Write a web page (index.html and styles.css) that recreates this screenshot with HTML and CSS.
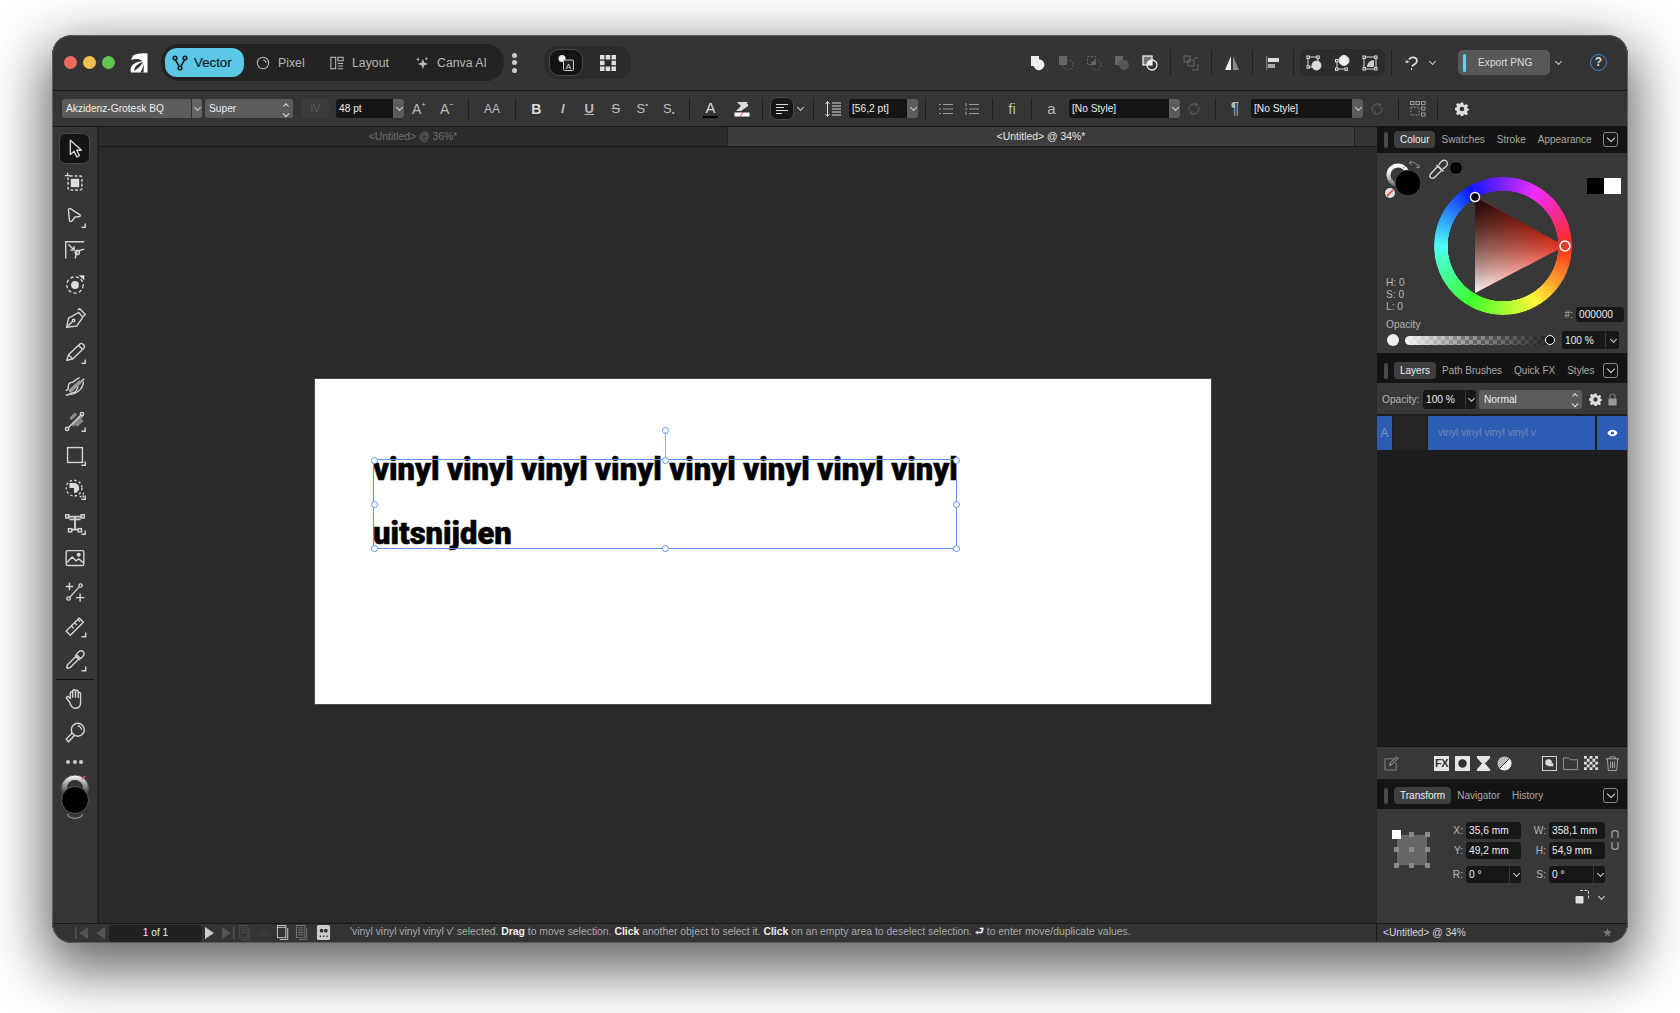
FILE: index.html
```html
<!DOCTYPE html>
<html lang="en">
<head>
    <meta charset="UTF-8">
    <title>Affinity - Untitled</title>
    <link rel="stylesheet" href="styles.css">
</head>
<body>
<div class="window">

    <!-- Title bar -->
    <div class="titlebar">
        <span class="light red"></span><span class="light yellow"></span><span class="light green"></span>
        <svg class="logo" viewBox="0 0 20 20">
            <path d="M2 7L4 2.5C8 0.5 13 0 18.5 0.5V19.5H2C0.5 15 3 10.5 9 9L13.5 8C10.5 5.5 6 5.5 2 7Z" fill="#fff"/>
            <path d="M14 9C9 10.5 5.5 13 5 18C8.5 16 12 13 14 9Z" fill="#343434"/>
            <path d="M15 10C14.5 13 13 17 11 19.5H14.5Z" fill="#343434"/>
        </svg>
        <div class="modes">
            <div class="mode mode-vector">
                <svg viewBox="0 0 16 16" fill="none" stroke="#10222a" stroke-width="1.6"><circle cx="3" cy="3" r="1.8"/><circle cx="13" cy="3" r="1.8"/><circle cx="8" cy="13" r="1.8"/><path d="M3.5 5L7 11M12.5 5L9 11"/></svg>
                <b>Vector</b>
            </div>
            <div class="mode mode-pixel">
                <svg viewBox="0 0 16 16" fill="none" stroke="#bbb" stroke-width="1.2"><circle cx="8" cy="8" r="6.5"/><path d="M8 4.5A3.5 3.5 0 0 1 11.5 8"/></svg>
                <span>Pixel</span>
            </div>
            <div class="mode mode-layout">
                <svg viewBox="0 0 16 16" fill="none" stroke="#bbb" stroke-width="1.2"><rect x="1" y="1.5" width="5.5" height="13"/><rect x="9" y="1.5" width="6" height="4"/><path d="M9 8.5H15M9 11.5H15M9 14.5H15"/></svg>
                <span>Layout</span>
            </div>
            <div class="mode mode-canva">
                <svg viewBox="0 0 16 16" fill="#bbb"><path d="M9 3L10.5 7.5L15 9L10.5 10.5L9 15L7.5 10.5L3 9L7.5 7.5Z"/><path d="M3.5 1L4.2 3L6 3.7L4.2 4.4L3.5 6.5L2.8 4.4L1 3.7L2.8 3Z"/><circle cx="13" cy="3" r="1.2"/></svg>
                <span>Canva AI</span>
            </div>
        </div>
        <div class="vdots"><i></i><i></i><i></i></div>
        <div class="studio">
            <div class="studio-btn">
                <svg viewBox="0 0 20 20" width="20" height="20" fill="none"><circle cx="6" cy="5.5" r="3.5" fill="#eee"/><rect x="7.5" y="7" width="10" height="10.5" rx="1" fill="#222" stroke="#ccc"/><text x="12.5" y="15.5" font-size="8" fill="#ddd" text-anchor="middle" font-family="Liberation Sans">A</text></svg>
            </div>
            <svg class="studio-grid" viewBox="0 0 16 16" fill="#ddd"><rect width="4.5" height="4.5"/><rect x="5.7" width="4.5" height="4.5"/><rect x="11.5" width="4.5" height="4.5"/><rect y="5.7" width="4.5" height="4.5"/><rect x="11.5" y="5.7" width="4.5" height="4.5"/><rect y="11.5" width="4.5" height="4.5"/><rect x="5.7" y="11.5" width="4.5" height="4.5"/><rect x="11.5" y="11.5" width="4.5" height="4.5"/></svg>
        </div>

        <div class="title-right">
            <div class="tic"><svg viewBox="0 0 16 16" fill="#eee"><path d="M1 1H9V4.2A5.5 5.5 0 1 1 3.6 11H1Z"/></svg></div>
            <div class="tic"><svg viewBox="0 0 16 16" fill="#666" stroke="#666"><rect x="1" y="1" width="8" height="9" stroke="none"/><circle cx="10" cy="10" r="5" fill="none" stroke-dasharray="2 1.5"/></svg></div>
            <div class="tic"><svg viewBox="0 0 16 16" fill="none" stroke="#666"><rect x="1.5" y="1.5" width="8" height="8" stroke-dasharray="2 1.5"/><circle cx="10" cy="10" r="5" stroke-dasharray="2 1.5"/><path d="M5 5.5H9.5V10H5.2A5 5 0 0 1 9.5 5.5Z" fill="#666" stroke="none"/></svg></div>
            <div class="tic"><svg viewBox="0 0 16 16" fill="#666"><path d="M1 1H9V5.2A5 5 0 0 0 5 10H1Z"/><circle cx="10" cy="10" r="5" fill="#555"/></svg></div>
            <div class="tic"><svg viewBox="0 0 16 16" fill="none" stroke="#eee" stroke-width="1.3"><rect x="1" y="1" width="9" height="9" fill="#eee" fill-opacity=".35"/><circle cx="10" cy="10" r="5"/><path d="M6 6H10V10H5.2" fill="#eee" stroke="none"/></svg></div>
            <span class="sep tall"></span>
            <div class="tic"><svg viewBox="0 0 16 16" fill="none" stroke="#666"><rect x="1" y="1" width="6" height="6"/><rect x="5" y="5" width="6" height="6"/><path d="M11 3H15M9 15H15V9"/></svg></div>
            <span class="sep tall"></span>
            <div class="tic"><svg viewBox="0 0 16 16"><path d="M7 1V15H1Z" fill="#eee"/><path d="M9 1L15 15H9Z" fill="#888"/></svg></div>
            <span class="sep tall"></span>
            <div class="tic"><svg viewBox="0 0 16 16" fill="#ddd"><rect x="1" y="1" width="1.4" height="14" fill="#777"/><rect x="3" y="3" width="11" height="4"/><rect x="3" y="9" width="7" height="4" fill="#aaa"/></svg></div>
            <span class="sep tall"></span>
            <div class="snap">
                <div class="tic"><svg viewBox="0 0 16 16" fill="none" stroke="#ddd"><circle cx="10.5" cy="10.5" r="4.5" fill="#ddd"/><rect x="2" y="2" width="10" height="10"/><rect x="1" y="1" width="2.4" height="2.4" fill="#333"/><rect x="10.8" y="1" width="2.4" height="2.4" fill="#333"/><rect x="1" y="10.8" width="2.4" height="2.4" fill="#333"/></svg></div>
                <div class="tic"><svg viewBox="0 0 16 16" fill="none" stroke="#ddd"><circle cx="10" cy="5.5" r="5" fill="#eee"/><path d="M3 6V14H11"/><rect x="1.5" y="4.5" width="2.4" height="2.4" fill="#333"/><rect x="1.5" y="13" width="2.4" height="2.4" fill="#333"/><rect x="11" y="13" width="2.4" height="2.4" fill="#333"/></svg></div>
                <div class="tic"><svg viewBox="0 0 16 16" fill="none" stroke="#ddd"><rect x="2" y="2" width="12" height="12"/><path d="M5 12C5 8 8 5 12 5V12Z" fill="#ccc" stroke="none"/><rect x="1" y="1" width="2.4" height="2.4" fill="#333"/><rect x="12.6" y="1" width="2.4" height="2.4" fill="#333"/><rect x="1" y="12.6" width="2.4" height="2.4" fill="#333"/><rect x="12.6" y="12.6" width="2.4" height="2.4" fill="#333"/></svg></div>
            </div>
            <span class="sep tall"></span>
            <div class="tic"><svg viewBox="0 0 16 16" fill="none" stroke="#ddd" stroke-width="1.8"><path d="M5 4.5C6.5 1.5 13 1.5 13 6C13 9 9.5 9 8 11.5"/><path d="M1.5 6.5L4.5 7M7 14L8 14"/></svg></div>
            <span class="chev small-chev"></span>
            <div class="export"><i></i><span>Export PNG</span></div>
            <span class="chev export-chev"></span>
            <div class="help">?</div>
        </div>
    </div>

    <!-- Context toolbar -->
    <div class="options">
        <div class="combo combo-font"><span>Akzidenz-Grotesk BQ</span><em></em></div>
        <div class="combo combo-super"><span>Super</span><u class="updown"></u></div>
        <div class="kern">iV</div>
        <div class="input input-size"><span>48 pt</span><em></em></div>
        <div class="op op-first">A<sup>+</sup></div>
        <div class="op">A<sup>−</sup></div>
        <span class="sep"></span>
        <div class="op op-aa">AA</div>
        <span class="sep"></span>
        <div class="op op-t bold">B</div>
        <div class="op op-t italic">I</div>
        <div class="op op-t under">U</div>
        <div class="op op-t strike">S</div>
        <div class="op op-t">S<sup>•</sup></div>
        <div class="op op-t">S<sub>•</sub></div>
        <span class="sep"></span>
        <div class="op op-colour">A<i></i></div>
        <div class="op op-hi">
            <svg viewBox="0 0 16 16" width="16" height="16"><path d="M2 10L9 3L14 3L14 5L7 10Z" fill="#ddd"/><path d="M3 1H14L9 7Z" fill="#ddd"/><rect x="0.5" y="11.5" width="15" height="4" fill="#fff"/><path d="M6 15.5L9 11.5" stroke="#e33"/></svg>
        </div>
        <span class="sep"></span>
        <div class="align-btn">
            <svg viewBox="0 0 14 12" width="14" height="12" stroke="#ddd"><path d="M1 1.5H13M1 4.5H9M1 7.5H13M1 10.5H7"/></svg>
        </div>
        <span class="chev align-chev"></span>
        <span class="sep"></span>
        <div class="op op-ls">
            <svg viewBox="0 0 18 18" width="18" height="18" fill="none" stroke="#ddd"><path d="M3.5 2V16M1.5 4L3.5 1.5L5.5 4M1.5 14L3.5 16.5L5.5 14"/><path d="M8 3H17M8 6H17M8 9H17M8 12H17M8 15H17"/></svg>
        </div>
        <div class="input input-ls"><span>[56,2 pt]</span><em></em></div>
        <span class="sep"></span>
        <div class="op op-list">
            <svg viewBox="0 0 14 12" width="14" height="12" stroke="#999" stroke-width="1.1"><path d="M0 1.5H2M0 6H2M0 10.5H2M4 1.5H14M4 6H14M4 10.5H14"/></svg>
        </div>
        <div class="op op-list">
            <svg viewBox="0 0 14 12" width="14" height="12" stroke="#999" stroke-width="1.1"><path d="M1 0V3.5M0 6H2.5M1 8.5V12M4 1.5H14M4 6H14M4 10.5H14"/></svg>
        </div>
        <span class="sep"></span>
        <div class="op op-fi">fi</div>
        <span class="sep"></span>
        <div class="op op-a">a</div>
        <div class="input input-style"><span>[No Style]</span><em></em></div>
        <div class="op op-loop"><svg viewBox="0 0 14 14" width="14" height="14" fill="none" stroke="#555" stroke-width="1.3"><path d="M2.5 9A5 5 0 0 1 10 3M11.5 5A5 5 0 0 1 4 11"/><path d="M8 1L10.5 3L8.5 5M6 13L3.5 11L5.5 9"/></svg></div>
        <span class="sep"></span>
        <div class="op op-pil">¶</div>
        <div class="input input-style2"><span>[No Style]</span><em></em></div>
        <div class="op op-loop"><svg viewBox="0 0 14 14" width="14" height="14" fill="none" stroke="#555" stroke-width="1.3"><path d="M2.5 9A5 5 0 0 1 10 3M11.5 5A5 5 0 0 1 4 11"/><path d="M8 1L10.5 3L8.5 5M6 13L3.5 11L5.5 9"/></svg></div>
        <span class="sep"></span>
        <div class="op op-ls"><svg viewBox="0 0 16 16" width="16" height="16" fill="none" stroke="#999"><rect x="0.5" y="0.5" width="3.5" height="3"/><rect x="6" y="0.5" width="3.5" height="3"/><rect x="11.5" y="0.5" width="3.5" height="3"/><rect x="11.5" y="6" width="3.5" height="3"/><rect x="11.5" y="12" width="3.5" height="3"/><path d="M1 6H9V14H1Z" stroke-dasharray="1.5 1.5"/></svg></div>
        <span class="sep"></span>
        <div class="op op-gear"><svg viewBox="0 0 24 24" width="14" height="14" fill="#ddd"><path d="M10 1H14L14.6 4.2L17 5.2L19.7 3.4L22.5 6.2L20.7 8.9L21.7 11.3L24 12V14L21.5 15L20.5 17.3L22.2 20L19.5 22.7L16.9 21L14.5 22L14 24H10L9.5 21.8L7 20.8L4.4 22.5L1.6 19.7L3.3 17.1L2.3 14.7L0 14V10L2.5 9.4L3.5 7L1.8 4.3L4.5 1.6L7.2 3.3L9.5 2.3ZM12 8A4 4 0 1 0 12 16A4 4 0 1 0 12 8Z" fill-rule="evenodd"/></svg></div>
    </div>

    <div class="main">

        <!-- Tools -->
        <div class="tools">
            <div class="tool active"><svg viewBox="0 0 28 28"><path d="M9 4.5V20L13 16.5L16 22.5L18.8 21L15.9 15.3H21Z" stroke-linejoin="round"/></svg></div>
            <div class="tool"><svg viewBox="0 0 28 28"><path d="M3 6H9M6 3V6"/><rect x="6.5" y="6.5" width="15" height="15" rx="2" stroke-dasharray="3 2"/><rect x="9.5" y="9.5" width="9" height="9" fill="#ddd" stroke="none"/></svg></div>
            <div class="tool"><svg viewBox="0 0 28 28"><path d="M7 6.5C7 5 8 4.5 9 5L19 11.5C20 12.2 19.8 13.5 18.5 13.6L14 14L11 18C10 19.2 8 19 8 17.5Z"/><path d="M25 21V25H21"/></svg></div>
            <div class="tool"><svg viewBox="0 0 28 28"><path d="M4 22V4H24"/><path d="M7 7L13 13M13 9V13H9"/><path d="M14 22L16.5 14M17 14L24 12"/><circle cx="16.5" cy="15.5" r="2.3"/></svg></div>
            <div class="tool"><svg viewBox="0 0 28 28"><circle cx="14" cy="14" r="8.8" stroke-dasharray="3.5 2.5"/><circle cx="14" cy="14" r="4.2" fill="#ddd" stroke="none"/><path d="M18 3.5L24 3.5V9Z" fill="#ddd" stroke="none"/></svg></div>
            <div class="tool"><svg viewBox="0 0 28 28"><path d="M5 23L7 13L18 7L22.5 12L16 21.5Z" stroke-linejoin="round"/><path d="M17 4.5L19 3L25 9L23 11.5"/><path d="M5.5 22.5L11.5 16.5"/><circle cx="12.5" cy="15.5" r="1.3"/></svg></div>
            <div class="tool"><svg viewBox="0 0 28 28"><path d="M5 22L7 16L19 4.5C20 3.5 21.5 3.5 22.5 4.5L23.5 5.5C24.5 6.5 24.5 8 23.5 9L11.5 20.5Z" stroke-linejoin="round"/><path d="M7 16L11.5 20.5M18 6L22 10"/><path d="M25 21V25H21"/></svg></div>
            <div class="tool"><svg viewBox="0 0 28 28"><path d="M4 23C9 22 9 20 12 20C15 20 17 16 17 12C17 10 20 9 24 5"/><path d="M4 18C7 17 7 14 7 12C7 8 12 10 14 7C15 6 17 5 19 4"/><path d="M9 22C14 22 23 17 23 8"/><path d="M8 19L20 8" stroke="#999" stroke-width="4"/></svg></div>
            <div class="tool"><svg viewBox="0 0 28 28"><path d="M9 12L15 6M11 19L22 8M15 19L22 13" stroke="#888" stroke-width="3.6"/><path d="M6.5 21.5L21 7"/><circle cx="5.5" cy="22.5" r="1.8"/><circle cx="21.5" cy="6.5" r="1.8"/><path d="M25 21V25H21"/></svg></div>
            <div class="tool"><svg viewBox="0 0 28 28"><rect x="6" y="6" width="16" height="16"/><path d="M25 21V25H21"/></svg></div>
            <div class="tool"><svg viewBox="0 0 28 28"><circle cx="13" cy="13" r="8.5" stroke-dasharray="2.5 2.5"/><path d="M13 7.5A5.5 5.5 0 0 1 18.5 13C18.5 16 16 18.5 13 18.5V13H8V7.5Z" fill="#ddd" stroke="none"/><path d="M19 22H23V18" stroke-dasharray="2 1"/><path d="M25 21V25H21"/></svg></div>
            <div class="tool"><svg viewBox="0 0 28 28"><path d="M6 6H22M14 6V20M10 20H18M8 9H20" stroke-width="2"/><rect x="4" y="4" width="3.5" height="3.5"/><rect x="20.5" y="4" width="3.5" height="3.5"/><rect x="7" y="19" width="3.5" height="3.5"/><rect x="17.5" y="19" width="3.5" height="3.5"/><path d="M25 21V25H21"/></svg></div>
            <div class="tool"><svg viewBox="0 0 28 28"><rect x="4.5" y="6" width="19" height="16" rx="1.5"/><path d="M5 19L11 13L15 17L18 15L23 19"/><circle cx="18" cy="10.5" r="1.5" fill="#ddd"/></svg></div>
            <div class="tool"><svg viewBox="0 0 28 28"><path d="M4 8H12M8 4V12M15 20H24M19.5 15.5V24.5"/><path d="M8.5 19.5L18.5 8.5"/><circle cx="7" cy="21" r="1.8"/><circle cx="20" cy="7" r="1.8"/></svg></div>
            <div class="tool"><svg viewBox="0 0 28 28"><path d="M4.5 19.5L18.5 5.5L23 10L9 24Z" stroke-linejoin="round"/><path d="M10 14L12.5 16.5M13.5 10.5L16 13M17 7L19.5 9.5"/><path d="M25.5 21V25.5H21"/></svg></div>
            <div class="tool"><svg viewBox="0 0 28 28"><path d="M5 22L6 19L15 10L18 13L9 22L6 23Z" stroke-linejoin="round"/><path d="M14 9L19 14M17 6C19 3.5 22 3.5 23 5C24.5 6.5 24 9 21.5 11L20 12.5L15.5 8Z"/><path d="M25.5 21V25.5H21"/></svg></div>
            <div class="tool-line"></div>
            <div class="tool"><svg viewBox="0 0 28 28"><path d="M8 17L5 13.5C4 12 6 10.5 7.5 12L9 13.5V7.5C9 5.5 11.5 5.5 11.5 7.5V12V5.5C11.5 3.5 14.5 3.5 14.5 5.5V12V6C14.5 4.2 17.5 4.2 17.5 6V12.5V8C17.5 6.5 20 6.5 20 8V18C20 22 17.5 24 14 24C11 24 9.5 22 8 17Z" stroke-linejoin="round"/></svg></div>
            <div class="tool"><svg viewBox="0 0 28 28"><circle cx="17" cy="10.5" r="7"/><path d="M17 6.5A4 4 0 0 1 21 10.5"/><path d="M11 14L4.5 20.5L7 23.5L13.5 16.5"/></svg></div>
            <div class="tool-dots"><i></i><i></i><i></i></div>
            <div class="tool-colour">
                <svg viewBox="0 0 30 46" width="30" height="46">
                    <defs><linearGradient id="strokefade" x1="0" y1="0" x2="0" y2="1"><stop offset="0" stop-color="#fff"/><stop offset=".7" stop-color="#444"/></linearGradient></defs>
                    <ellipse cx="15" cy="14" rx="13.5" ry="13" fill="url(#strokefade)" stroke="#555"/>
                    <ellipse cx="15" cy="14" rx="8" ry="8" fill="#333"/>
                    <path d="M22 5L25 2" stroke="#e66" stroke-width="1.2"/>
                    <circle cx="15" cy="26" r="13.5" fill="#000" stroke="#555"/>
                    <path d="M8 42C12 45 18 45 22 42M8 42L8 40M22 42L22 40" fill="none" stroke="#aaa"/>
                </svg>
            </div>
        </div>

        <!-- Documents -->
        <div class="work">
            <div class="tabs">
                <div class="tab">&lt;Untitled&gt; @ 36%*</div>
                <div class="tab tab-on">&lt;Untitled&gt; @ 34%*</div>
                <div class="tab-rest"></div>
            </div>
            <div class="canvas">
                <div class="doc">
                    <div class="frame-text">vinyl vinyl vinyl vinyl vinyl vinyl vinyl vinyl<br>uitsnijden</div>
                    <div class="frame">
                        <i class="grip g-rot"></i><i class="rot-line"></i>
                        <i class="grip g-tl"></i><i class="grip g-tm"></i><i class="grip g-tr"></i>
                        <i class="grip g-ml"></i><i class="grip g-mr"></i>
                        <i class="grip g-bl"></i><i class="grip g-bm"></i><i class="grip g-br"></i>
                    </div>
                </div>
            </div>
        </div>

        <!-- Studio panels -->
        <div class="panels">
            <div class="phead">
                <i class="pgrip"></i>
                <span class="ptab on">Colour</span><span class="ptab">Swatches</span><span class="ptab">Stroke</span><span class="ptab">Appearance</span>
                <span class="pmenu"></span>
            </div>
            <div class="colour">
                <svg class="colour-pick" viewBox="0 0 90 50" width="90" height="50" fill="none">
                    <defs><linearGradient id="ringfade" x1="0" y1="0" x2="0" y2="1"><stop offset=".3" stop-color="#fff"/><stop offset="1" stop-color="#777"/></linearGradient></defs>
                    <circle cx="21" cy="22" r="9.5" stroke="url(#ringfade)" stroke-width="4"/>
                    <path d="M27.5 13.5L26 15.5M13 28L15.5 26.5" stroke="#e55" stroke-width="1.2"/>
                    <circle cx="31" cy="30" r="13" fill="#000" stroke="#4a4a4a"/>
                    <circle cx="13" cy="40" r="5" fill="#ddd"/><path d="M10 43L16 37" stroke="#e33" stroke-width="1.5"/>
                    <path d="M32 10C36 8 40 10 42 15M32 10L34.5 8M32 10L35 12M42 15L42 11.5M42 15L39 14" stroke="#888"/>
                    <path d="M54 25C52.5 24 52.5 22.5 53.5 21L61 13L65 17L57.5 24.5C56.5 25.5 55 25.5 54 25Z" stroke="#ddd" stroke-width="1.3"/>
                    <path d="M59.5 12L66.5 18.5M62 12C63 9 66 6.5 68.5 7.5C71 8.5 71 11.5 69 13.5L66 16" stroke="#ddd" stroke-width="1.3"/>
                    <circle cx="79" cy="15" r="6.5" fill="#000" stroke="#4a4a4a"/>
                </svg>
                <div class="colour-top">
                    <div class="colour-left">
                        <div>H: 0</div><div>S: 0</div><div>L: 0</div>
                        <div class="opacity-label">Opacity</div>
                    </div>
                    <div class="wheel">
                        <div class="ring"></div>
                        <svg class="tri" viewBox="0 0 138 138" width="138" height="138">
                            <defs>
                                <linearGradient id="tw" gradientUnits="userSpaceOnUse" x1="41" y1="116" x2="86" y2="44"><stop offset="0" stop-color="#fff"/><stop offset="1" stop-color="#fff" stop-opacity="0"/></linearGradient>
                                <linearGradient id="tk" gradientUnits="userSpaceOnUse" x1="41" y1="20" x2="86" y2="93"><stop offset="0" stop-color="#000" stop-opacity=".9"/><stop offset="1" stop-color="#000" stop-opacity="0"/></linearGradient>
                            </defs>
                            <path d="M41 20L131 69L41 116Z" fill="#dc3421"/>
                            <path d="M41 20L131 69L41 116Z" fill="url(#tw)"/>
                            <path d="M41 20L131 69L41 116Z" fill="url(#tk)"/>
                            <circle cx="41" cy="20" r="4.5" fill="#000" stroke="#fff" stroke-width="1.5"/>
                            <circle cx="131" cy="69" r="5" fill="#d8402f" stroke="#fff" stroke-width="1.5"/>
                        </svg>
                    </div>
                    <div class="colour-right">
                        <div class="chips"><i class="chip-k"></i><i class="chip-w"></i></div>
                        <div class="hex"><label>#:</label><span>000000</span></div>
                    </div>
                </div>
                <div class="opacity-row">
                    <i class="op-dot"></i>
                    <div class="slider"><i></i></div>
                    <div class="value"><span>100 %</span><em></em></div>
                </div>
            </div>

            <div class="phead phead-tall">
                <i class="pgrip"></i>
                <span class="ptab on">Layers</span><span class="ptab">Path Brushes</span><span class="ptab">Quick FX</span><span class="ptab">Styles</span>
                <span class="pmenu"></span>
            </div>
            <div class="layer-opts">
                <label>Opacity:</label>
                <div class="value value-layer"><span>100 %</span><em></em></div>
                <div class="combo combo-blend"><span>Normal</span><u class="updown"></u></div>
                <svg class="layer-gear" viewBox="0 0 24 24" width="13" height="13" fill="#ddd"><path d="M10 1H14L14.6 4.2L17 5.2L19.7 3.4L22.5 6.2L20.7 8.9L21.7 11.3L24 12V14L21.5 15L20.5 17.3L22.2 20L19.5 22.7L16.9 21L14.5 22L14 24H10L9.5 21.8L7 20.8L4.4 22.5L1.6 19.7L3.3 17.1L2.3 14.7L0 14V10L2.5 9.4L3.5 7L1.8 4.3L4.5 1.6L7.2 3.3L9.5 2.3ZM12 8A4 4 0 1 0 12 16A4 4 0 1 0 12 8Z" fill-rule="evenodd"/></svg>
                <svg class="layer-lock" viewBox="0 0 12 14" width="11" height="13"><path d="M3 6V4A3 3 0 0 1 9 4V6" fill="none" stroke="#777" stroke-width="1.3"/><rect x="1.5" y="6" width="9" height="7.5" rx="1" fill="#999"/></svg>
            </div>
            <div class="layers">
                <div class="layer">
                    <div class="layer-a">A</div>
                    <div class="layer-thumb"></div>
                    <div class="layer-name">vinyl vinyl vinyl vinyl v</div>
                    <div class="layer-eye"><svg viewBox="0 0 14 10" width="11" height="8"><path d="M0.5 5C3.5 -0.5 10.5 -0.5 13.5 5C10.5 10.5 3.5 10.5 0.5 5Z" fill="#fff"/><circle cx="7" cy="5" r="2" fill="#2d5cb3"/></svg></div>
                </div>
            </div>
            <div class="layer-foot">
                <svg viewBox="0 0 16 16" class="lf lf-edit" fill="none" stroke="#888"><path d="M1 3H10M1 3V15H13V7"/><path d="M6 10L7 7L13.5 1L15 2.5L8.5 9Z" stroke="#aaa"/></svg>
                <div class="lf lf-fx">FX</div>
                <svg viewBox="0 0 16 16" class="lf"><rect width="16" height="16" fill="#e6e6e6"/><circle cx="8" cy="8" r="4.5" fill="#333"/></svg>
                <svg viewBox="0 0 16 16" class="lf"><path d="M1 0H15L15 2L9.5 8L15 14V16H1V14L6.5 8L1 2Z" fill="#e6e6e6"/></svg>
                <svg viewBox="0 0 16 16" class="lf"><circle cx="8" cy="8" r="7.5" fill="#bbb"/><path d="M13.3 2.7A7.5 7.5 0 0 1 2.7 13.3Z" fill="#eee"/><path d="M13.3 2.7L2.7 13.3" stroke="#333"/></svg>
                <svg viewBox="0 0 16 16" class="lf lf-gap" fill="none" stroke="#ddd"><rect x=".5" y=".5" width="15" height="15"/><circle cx="7" cy="7" r="3.5" fill="#ddd" stroke="none"/><path d="M6 11H12V7" fill="#ddd" stroke="none"/></svg>
                <svg viewBox="0 0 16 16" class="lf" fill="none" stroke="#999"><path d="M.5 14.5V2H6L7.5 4H15.5V14.5Z"/></svg>
                <svg viewBox="0 0 16 16" class="lf lf-check"><path d="M0 0h3v3H0zM6 0h3v3H6zM12 0h3v3h-3zM3 3h3v3H3zM9 3h3v3H9zM0 6h3v3H0zM6 6h3v3H6zM12 6h3v3h-3zM3 9h3v3H3zM9 9h3v3H9zM0 12h3v3H0zM6 12h3v3H6zM12 12h3v3h-3z" fill="#ddd"/></svg>
                <svg viewBox="0 0 16 16" class="lf" fill="none" stroke="#aaa"><path d="M1 3H15M5 3V1H11V3M2.5 3L3.5 15.5H12.5L13.5 3M6 6V13M8 6V13M10 6V13"/></svg>
            </div>

            <div class="phead phead-tr">
                <i class="pgrip"></i>
                <span class="ptab on">Transform</span><span class="ptab">Navigator</span><span class="ptab">History</span>
                <span class="pmenu"></span>
            </div>
            <div class="transform">
                <svg class="anchor" viewBox="0 0 36 36" width="36" height="36">
                    <rect x="3" y="3" width="30" height="30" fill="#666"/>
                    <g fill="#8a8a8a">
                        <rect x="15" y="0" width="5" height="5"/><rect x="31" y="0" width="5" height="5"/>
                        <rect x="0" y="15" width="5" height="5"/><rect x="15" y="15" width="5" height="5"/><rect x="31" y="15" width="5" height="5"/>
                        <rect x="0" y="31" width="5" height="5"/><rect x="15" y="31" width="5" height="5"/><rect x="31" y="31" width="5" height="5"/>
                    </g>
                    <rect x="-2" y="-2" width="9" height="9" fill="#fff"/>
                </svg>
                <div class="fields">
                    <label>X:</label><div class="field">35,6 mm</div>
                    <label>W:</label><div class="field">358,1 mm</div>
                    <svg class="chain" viewBox="0 0 8 20" width="8" height="20" fill="none" stroke="#aaa" stroke-width="1.2"><path d="M1 8V2.5C1 1 2 .7 4 .7C6 .7 7 1 7 2.5V8M1 12V17.5C1 19 2 19.3 4 19.3C6 19.3 7 19 7 17.5V12"/></svg>
                    <label>Y:</label><div class="field">49,2 mm</div>
                    <label>H:</label><div class="field">54,9 mm</div>
                    <label class="row3">R:</label><div class="field field-drop row3"><span>0 °</span><em></em></div>
                    <label class="row3">S:</label><div class="field field-drop row3"><span>0 °</span><em></em></div>
                </div>
                <div class="transform-more">
                    <svg viewBox="0 0 14 14" width="14" height="14" fill="none" stroke="#ccc"><path d="M5 .5H13.5V9" stroke-dasharray="3 1.5"/><rect x="0.5" y="6" width="8" height="7.5" rx="1" fill="#ddd" stroke="none"/></svg>
                    <span class="chev"></span>
                </div>
            </div>
        </div>
    </div>

    <!-- Status -->
    <div class="status">
        <div class="status-left">
            <svg class="st st-first" viewBox="0 0 14 12" fill="#555"><rect x="0" y="0" width="1.5" height="12"/><path d="M13 0V12L4 6Z"/></svg>
            <svg class="st st-prev" viewBox="0 0 14 12" fill="#555"><path d="M12 0V12L3 6Z"/></svg>
            <div class="page">1 of 1</div>
            <svg class="st st-next" viewBox="0 0 14 12" fill="#ccc"><path d="M2 0V12L11 6Z"/></svg>
            <svg class="st st-last" viewBox="0 0 14 12" fill="#555"><path d="M1 0V12L10 6Z"/><rect x="12" y="0" width="1.5" height="12"/></svg>
            <svg class="st2" viewBox="0 0 14 16" fill="none" stroke="#4d4d4d"><rect x=".5" y=".5" width="9" height="13"/><path d="M2 3H8M2 5.5H8M2 8H8"/><path d="M11 3V15.5H3"/></svg>
            <svg class="st2" viewBox="0 0 14 16" fill="none" stroke="#444"><path d="M1 10C4 6 10 6 13 10M3 12C5 10 9 10 11 12"/></svg>
            <svg class="st2" viewBox="0 0 14 16" fill="none" stroke="#ccc"><rect x=".5" y=".5" width="9" height="13"/><path d="M.5 2.5H9.5"/><path d="M11.5 3V15.5H3"/></svg>
            <svg class="st2" viewBox="0 0 14 16" fill="none" stroke="#777"><rect x=".5" y=".5" width="9" height="13"/><path d="M2 3H8M2 5.5H8M2 8H8M2 10.5H8"/><path d="M11.5 3V15.5H3"/></svg>
            <svg class="st2 st-on" viewBox="0 0 14 16"><rect width="14" height="16" rx="2" fill="#ccc"/><circle cx="5" cy="6" r="2" fill="#333"/><circle cx="9.5" cy="6" r="2" fill="#333"/><path d="M3 12H4.5M6.5 12H8M10 12H11.5" stroke="#333" stroke-width="1.5"/></svg>
            <div class="hint">'vinyl vinyl vinyl vinyl v' selected. <b>Drag</b> to move selection. <b>Click</b> another object to select it. <b>Click</b> on an empty area to deselect selection. <b>⮐</b> to enter move/duplicate values.</div>
        </div>
        <div class="status-right">
            <span>&lt;Untitled&gt; @ 34%</span>
            <svg viewBox="0 0 10 10" width="9" height="9" fill="#777"><path d="M5 0L6.2 3.4L10 3.8L7 6L8.1 9.7L5 7.6L1.9 9.7L3 6L0 3.8L3.8 3.4Z"/></svg>
        </div>
    </div>
</div>
</body>
</html>
```
FILE: styles.css
```css
* {
    margin: 0;
    padding: 0;
    box-sizing: border-box;
}

body {
    background: #fff;
    height: 1013px;
    padding: 35px 52px 0;
    overflow: hidden;
    font-family: "Liberation Sans", Arial, sans-serif;
    font-size: 10.2px;
    color: #ccc;
}

svg {
    display: block;
    flex: none;
}

.window {
    width: 1576px;
    height: 908px;
    position: relative;
    border-radius: 20px;
    overflow: hidden;
    display: flex;
    flex-direction: column;
    background: #333;
}

/* the shadow sits on the body side so the rim can stay inside the window */
.window::after {
    content: '';
    position: absolute;
    inset: 0;
    border: 1px solid #5e5e5e;
    border-radius: 20px;
    pointer-events: none;
}

body::before {
    content: '';
    position: absolute;
    left: 52px;
    top: 35px;
    width: 1576px;
    height: 908px;
    border-radius: 20px;
    box-shadow: 0 20px 55px 8px rgba(0, 0, 0, 0.6);
}

/* Title bar */
.titlebar {
    height: 56px;
    flex: none;
    display: flex;
    align-items: center;
    padding: 0 21px 0 12px;
    background: #343434;
    border-bottom: 1px solid #191919;
}

.light {
    width: 13px;
    height: 13px;
    border-radius: 50%;
    margin-right: 6px;
}

.red { background: #ec6a5e; }
.yellow { background: #f4bf4f; }
.green { background: #61c554; }

.logo {
    width: 20px;
    height: 20px;
    margin: 0 12px 0 8px;
}

.modes {
    width: 343px;
    height: 37px;
    padding: 4px;
    display: flex;
    align-items: center;
    border-radius: 18px;
    background: #232323;
}

.mode {
    height: 29px;
    display: flex;
    align-items: center;
    gap: 8px;
    font-size: 12.3px;
    color: #b5b5b5;
    flex: none;
}

.mode svg {
    width: 14px;
    height: 14px;
}

.mode-vector {
    width: 79px;
    padding-left: 7px;
    gap: 6px;
    font-size: 13.3px;
    border-radius: 12px;
    background: #5bc9e6;
    color: #10222a;
}

.mode-vector svg {
    width: 16px;
    height: 16px;
}

.mode-vector b {
    font-weight: normal;
    -webkit-text-stroke: 0.2px #10222a;
}

.mode-pixel { width: 76px; padding-left: 12px; }
.mode-layout { width: 86px; padding-left: 10px; }
.mode-canva { width: 94px; padding-left: 9px; }

.vdots {
    margin-left: 8px;
    width: 6px;
    display: flex;
    flex-direction: column;
    gap: 2.5px;
}

.vdots i {
    width: 5px;
    height: 5px;
    border-radius: 50%;
    background: #ccc;
}

.studio {
    margin-left: 26px;
    width: 87px;
    height: 33px;
    padding: 3px 5px;
    display: flex;
    align-items: center;
    border-radius: 14px;
    background: #2b2b2b;
}

.studio-btn {
    width: 34px;
    height: 27px;
    display: flex;
    align-items: center;
    justify-content: center;
    border: 1px solid #4a4a4a;
    border-radius: 10px;
    background: #141414;
}

.studio-grid {
    width: 16px;
    height: 16px;
    margin-left: 17px;
}

.title-right {
    margin-left: auto;
    display: flex;
    align-items: center;
}

.tic {
    width: 28px;
    display: flex;
    justify-content: center;
}

.tic svg {
    width: 16px;
    height: 16px;
}

.sep {
    width: 1px;
    height: 22px;
    margin: 0 7px;
    background: #202020;
    flex: none;
}

.sep.tall {
    height: 26px;
    margin: 0 6px;
}

.snap {
    width: 85px;
    height: 27px;
    display: flex;
    align-items: center;
    border-radius: 7px;
    background: #2c2c2c;
}

.chev {
    width: 12px;
    height: 12px;
    flex: none;
    display: block;
    position: relative;
}

.chev::after,
.combo em::after,
.input em::after,
.value em::after,
.field-drop em::after {
    content: '';
    position: absolute;
    left: 50%;
    top: 50%;
    width: 4px;
    height: 4px;
    margin: -3.5px 0 0 -2px;
    border-right: 1.2px solid #ccc;
    border-bottom: 1.2px solid #ccc;
    transform: rotate(45deg);
}

.export {
    width: 92px;
    height: 25px;
    margin-left: 20px;
    padding-left: 5px;
    display: flex;
    align-items: center;
    font-size: 10.2px;
    color: #ddd;
    border-radius: 5px;
    background: #585858;
}

.export i {
    width: 3px;
    height: 18px;
    border-radius: 2px;
    background: #55d8ee;
    margin-right: 12px;
}

.export-chev {
    width: 16px;
}

.help {
    width: 17px;
    height: 17px;
    margin-left: 24px;
    border: 1.3px solid #3d84e6;
    border-radius: 50%;
    font-size: 12px;
    font-weight: bold;
    line-height: 14.5px;
    text-align: center;
    color: #ddd;
}

/* Context toolbar */
.options {
    height: 36px;
    flex: none;
    display: flex;
    align-items: center;
    padding-left: 10px;
    background: #353535;
    border-bottom: 1px solid #191919;
}

.combo {
    height: 19px;
    padding-left: 4px;
    display: flex;
    align-items: center;
    position: relative;
    border-radius: 3px;
    background: #5c5c5c;
    color: #eee;
    flex: none;
}

.combo em,
.input em,
.value em,
.field-drop em {
    position: absolute;
    right: 0;
    top: 0;
    bottom: 0;
    width: 11px;
}

.combo-font { width: 140px; }
.combo-font em { background: #646464; border-left: 1px solid #333; border-radius: 0 3px 3px 0; }
.combo-super { width: 88px; margin-left: 3px; }

.updown {
    position: absolute;
    right: 5px;
    top: 50%;
    width: 4px;
    height: 4px;
    margin-top: -5px;
    border-left: 1px solid #ddd;
    border-top: 1px solid #ddd;
    transform: rotate(45deg);
}

.updown::after {
    content: '';
    position: absolute;
    left: 4px;
    top: 4px;
    width: 4px;
    height: 4px;
    border-right: 1px solid #ddd;
    border-bottom: 1px solid #ddd;
}

.kern {
    width: 27px;
    height: 19px;
    margin-left: 9px;
    border-radius: 3px;
    background: #3c3c3c;
    color: #5e5e5e;
    font-size: 11px;
    line-height: 19px;
    text-align: center;
    flex: none;
}

.input {
    height: 19px;
    padding-left: 3px;
    display: flex;
    align-items: center;
    position: relative;
    border-radius: 3px;
    background: #151515;
    color: #eee;
    flex: none;
}

.input em {
    background: #5c5c5c;
    border-radius: 0 3px 3px 0;
}

.input-size { width: 68px; margin-left: 7px; }
.input-ls { width: 69px; margin-left: 4px; }
.input-style { width: 111px; margin-left: 5px; }
.input-style2 { width: 112px; margin-left: 4px; }

.op {
    width: 24px;
    flex: none;
    display: flex;
    justify-content: center;
    align-items: center;
    font-size: 14px;
    color: #bbb;
    line-height: 16px;
    position: relative;
}

.op sup, .op sub {
    font-size: 8px;
    line-height: 8px;
    vertical-align: baseline;
}

.op sup { align-self: flex-start; }
.op sub { align-self: flex-end; }

.op-first { width: 28px; margin-left: 1px; }
.op-first + .op { width: 28px; }
.op-aa { width: 32px; font-size: 12px; }
.op-t { width: 26.5px; font-size: 13px; }
.bold { font-weight: bold; font-size: 14px; color: #ddd; }
.italic { font-style: italic; font-weight: bold; }
.under { text-decoration: underline; font-weight: bold; }
.strike { text-decoration: line-through; }

.op-colour {
    width: 27px;
    height: 18px;
    font-size: 15px;
    color: #ddd;
    align-items: flex-start;
}

.op-colour i {
    position: absolute;
    left: 6px;
    right: 6px;
    bottom: 0;
    height: 2px;
    background: #000;
}

.op-hi { width: 27px; margin-left: 4px; }
.op-list { width: 26px; }
.op-fi { font-size: 15px; color: #bbb; }
.op-a { width: 25px; font-size: 15px; }
.op-loop { width: 28px; }
.op-pil { font-size: 16px; }
.op-gear { width: 34px; }

.align-btn {
    width: 24px;
    height: 23px;
    flex: none;
    display: flex;
    align-items: center;
    justify-content: center;
    border: 1px solid #4a4a4a;
    border-radius: 7px;
    background: #161616;
}

.align-chev { width: 12px; }

/* Main area */
.main {
    flex: 1;
    display: flex;
    min-height: 0;
}

.tools {
    width: 47px;
    flex: none;
    padding-top: 6px;
    display: flex;
    flex-direction: column;
    align-items: center;
    background: #363636;
    border-right: 2px solid #222;
}

.tool {
    width: 31px;
    height: 31px;
    margin-bottom: 3.1px;
    flex: none;
    display: flex;
    align-items: center;
    justify-content: center;
}

.tool svg {
    width: 26px;
    height: 26px;
    fill: none;
    stroke: #d4d4d4;
    stroke-width: 1.5;
}

.tool.active {
    border: 1px solid #4a4a4a;
    border-radius: 7px;
    background: #141414;
}

.tool-line {
    width: 38px;
    height: 1px;
    margin: 0 0 4px;
    background: #141414;
    flex: none;
}

.tool-dots {
    display: flex;
    gap: 2.5px;
    height: 18px;
    align-items: center;
    margin-top: 1px;
}

.tool-dots i {
    width: 4px;
    height: 4px;
    border-radius: 50%;
    background: #ccc;
}

.tool-colour {
    margin-top: 3px;
}

.work {
    flex: 1;
    display: flex;
    flex-direction: column;
    min-width: 0;
}

.tabs {
    height: 20px;
    flex: none;
    display: flex;
    background: #2c2c2c;
    border-bottom: 1px solid #1a1a1a;
}

.tab {
    width: 628px;
    text-align: center;
    line-height: 19px;
    font-size: 10.4px;
    color: #6f6f6f;
}

.tab-on {
    color: #e6e6e6;
    background: #3c3c3c;
    border-left: 1px solid #222;
    border-right: 1px solid #222;
}

.tab-rest {
    flex: 1;
    background: #333;
}

.canvas {
    flex: 1;
    padding: 232px 0 0 216px;
    background: #2a2a2a;
}

.doc {
    width: 896px;
    height: 325px;
    position: relative;
    background: #fff;
    box-shadow: 0 0 0 1px #4a4a4a;
}

.frame-text {
    position: absolute;
    left: 58px;
    top: 59px;
    white-space: nowrap;
    font-family: Roboto, "Liberation Sans", sans-serif;
    font-weight: 900;
    font-size: 31px;
    line-height: 64px;
    color: #000;
    word-spacing: -0.3px;
    -webkit-text-stroke: 0.5px #000;
}

.frame {
    position: absolute;
    left: 58px;
    top: 80px;
    width: 584px;
    height: 90px;
    border: 1px solid #5d94ec;
}

.grip {
    position: absolute;
    width: 7px;
    height: 7px;
    margin: -3.5px 0 0 -3.5px;
    border: 1px solid #5d94ec;
    border-radius: 50%;
    background: #fff;
}

.g-tl { left: 0; top: 0; }
.g-tm { left: 50%; top: 0; }
.g-tr { left: 100%; top: 0; }
.g-ml { left: 0; top: 50%; }
.g-mr { left: 100%; top: 50%; }
.g-bl { left: 0; top: 100%; }
.g-bm { left: 50%; top: 100%; }
.g-br { left: 100%; top: 100%; }
.g-rot { left: 50%; top: -30px; }

.rot-line {
    position: absolute;
    left: 50%;
    top: -28px;
    width: 1px;
    height: 28px;
    background: #8db3f0;
}

/* Studio panels */
.panels {
    width: 251px;
    flex: none;
    display: flex;
    flex-direction: column;
    background: #141414;
}

.phead {
    height: 26px;
    flex: none;
    padding: 0 10px 5px 7px;
    display: flex;
    align-items: flex-end;
    font-size: 10px;
    background: #141414;
}

.phead-tall { height: 30px; padding-bottom: 4px; }
.phead-tr { height: 30px; padding-bottom: 5px; }

.pgrip {
    width: 4px;
    height: 16px;
    margin-right: 6px;
    border-radius: 2px;
    background: #4a4a4a;
}

.ptab {
    height: 17px;
    line-height: 17px;
    padding: 0 6px;
    color: #a8a8a8;
    border-radius: 4px;
}

.ptab.on {
    background: #3f3f3f;
    color: #eee;
}

.pmenu {
    width: 15px;
    height: 15px;
    margin-left: auto;
    margin-bottom: 1px;
    position: relative;
    border: 1px solid #8a8a8a;
    border-radius: 3px;
}

.pmenu::after {
    content: '';
    position: absolute;
    left: 3.5px;
    top: 1.5px;
    width: 5px;
    height: 5px;
    border-right: 1.3px solid #ddd;
    border-bottom: 1.3px solid #ddd;
    transform: rotate(45deg);
}

.colour {
    height: 200px;
    flex: none;
    position: relative;
    background: #383838;
}

.colour-pick {
    position: absolute;
    left: 0;
    top: 0;
    z-index: 2;
}

.colour-top {
    height: 178px;
    display: flex;
}

.colour-left {
    width: 57px;
    padding-left: 9px;
    display: flex;
    flex-direction: column;
    justify-content: flex-end;
    line-height: 12.3px;
    color: #b5b5b5;
}

.opacity-label {
    margin-top: 5px;
}

.wheel {
    width: 138px;
    height: 138px;
    margin-top: 24px;
    position: relative;
    flex: none;
}

.ring {
    position: absolute;
    inset: 0;
    border-radius: 50%;
    background: conic-gradient(from 90deg, #ff2a1a, #fff93a, #3dff2a, #4dfff5, #0a16ff, #ee2dff, #ff2a1a);
    -webkit-mask: radial-gradient(circle, transparent 55px, #000 55.5px);
    mask: radial-gradient(circle, transparent 55px, #000 55.5px);
}

.tri {
    position: absolute;
    left: 0;
    top: 0;
}

.colour-right {
    flex: 1;
    display: flex;
    flex-direction: column;
    justify-content: space-between;
    align-items: flex-end;
    padding: 25px 4px 9px 0;
}

.chips {
    display: flex;
    margin-right: 3px;
}

.chips i {
    width: 17px;
    height: 16px;
}

.chip-k { background: #000; }
.chip-w { background: #fff; }

.hex {
    display: flex;
    align-items: center;
    gap: 3px;
    margin-left: -12px;
    color: #b5b5b5;
    white-space: nowrap;
}

.hex span {
    width: 48px;
    height: 15px;
    padding-left: 3px;
    line-height: 15px;
    color: #eee;
    border-radius: 3px;
    background: #171717;
}

.opacity-row {
    height: 18px;
    padding-left: 10px;
    display: flex;
    align-items: center;
}

.op-dot {
    width: 12px;
    height: 12px;
    border-radius: 50%;
    background: #eee;
}

.slider {
    width: 150px;
    height: 9px;
    margin-left: 6px;
    position: relative;
    border-radius: 5px;
    background:
        linear-gradient(90deg, rgba(255, 255, 255, 0.95), rgba(255, 255, 255, 0.3) 45%, rgba(30, 30, 30, 0.9)),
        repeating-conic-gradient(#666 0 25%, #222 0 50%) 0 0 / 8px 8px;
}

.slider i {
    position: absolute;
    right: 0;
    top: -0.5px;
    width: 10px;
    height: 10px;
    border: 1.3px solid #fff;
    border-radius: 50%;
    background: #111;
}

.value {
    height: 18px;
    width: 57px;
    margin-left: 7px;
    padding-left: 3px;
    position: relative;
    display: flex;
    align-items: center;
    color: #eee;
    border-radius: 3px;
    background: #171717;
}

.value em {
    width: 14px;
    border-left: 1px solid #383838;
}

.layer-opts {
    height: 31px;
    flex: none;
    padding: 1px 0 0 5px;
    display: flex;
    align-items: center;
    background: #383838;
    color: #b5b5b5;
}

.layer-opts label {
    width: 41px;
}

.value-layer {
    width: 53px;
    height: 19px;
    margin-left: 0;
}

.value-layer em {
    width: 11px;
}

.combo-blend {
    width: 103px;
    margin-left: 3px;
    padding-left: 5px;
}

.layer-gear {
    margin-left: 7px;
}

.layer-lock {
    margin-left: 5px;
}

.layers {
    height: 332px;
    flex: none;
    padding-top: 2px;
    background: #1d1d1d;
}

.layer {
    height: 34px;
    margin-right: 1px;
    display: flex;
    gap: 1px;
}

.layer-a {
    width: 15px;
    background: #2d5cb3;
    color: #7d93bf;
    font-size: 12px;
    line-height: 34px;
    text-align: center;
}

.layer-thumb {
    width: 34px;
    background: #242424;
}

.layer-name {
    width: 167px;
    padding-left: 10px;
    line-height: 34px;
    color: #7088b6;
    background: #2d5cb3;
}

.layer-eye {
    flex: 1;
    margin-left: 1px;
    display: flex;
    align-items: center;
    justify-content: center;
    background: #2d5cb3;
}

.layer-foot {
    height: 33px;
    flex: none;
    padding-left: 7px;
    display: flex;
    align-items: center;
    gap: 6px;
    background: #383838;
    border-top: 1px solid #141414;
}

.lf {
    width: 15px;
    height: 15px;
    flex: none;
}

.lf-edit {
    margin-right: 29px;
}

.lf-fx {
    font-size: 11px;
    font-weight: bold;
    line-height: 15px;
    text-align: center;
    letter-spacing: -0.5px;
    color: #333;
    background: #e6e6e6;
}

.lf-gap {
    margin-left: 24px;
}

.transform {
    flex: 1;
    padding: 12px 0 0 17px;
    display: flex;
    flex-wrap: wrap;
    align-content: flex-start;
    background: #383838;
}

.anchor {
    margin: 11px 16px 0 0;
    overflow: visible;
}

.fields {
    display: grid;
    grid-template-columns: 20px 55px 8px 20px 56px 20px;
    grid-template-rows: 18px 18px 18px;
    row-gap: 2px;
    align-items: center;
    color: #b5b5b5;
}

.fields label {
    text-align: right;
    padding-right: 3px;
}

.fields > label:nth-of-type(even) {
    grid-column: 4;
}

.fields > label:nth-of-type(odd) {
    grid-column: 1;
}

.row3 {
    margin-top: 9px;
}

.field {
    height: 17px;
    padding-left: 3px;
    line-height: 17px;
    color: #eee;
    border-radius: 3px;
    background: #171717;
    position: relative;
}

.field-drop em {
    width: 12px;
    border-left: 1px solid #383838;
}

.chain {
    grid-column: 6;
    grid-row: 1 / 3;
    justify-self: center;
}

.transform-more {
    width: 100%;
    margin-top: 11px;
    padding-right: 21px;
    display: flex;
    align-items: center;
    justify-content: flex-end;
    gap: 6px;
}

/* Status */
.status {
    height: 20px;
    flex: none;
    display: flex;
    background: #333;
    border-top: 1px solid #191919;
}

.status-left {
    width: 1325px;
    padding: 0 0 1px 22px;
    display: flex;
    align-items: center;
    border-right: 1px solid #191919;
}

.st {
    width: 14px;
    height: 12px;
    flex: none;
    margin-top: -1px;
}

.st-first { margin-left: 1px; margin-right: 1px; }
.st-prev { margin-left: 3px; margin-right: 1px; }
.st-next { margin-left: 1px; margin-right: 2px; }
.st-last { margin-left: 2px; margin-right: 3px; }

.page {
    width: 93px;
    height: 17px;
    line-height: 15px;
    margin-left: 1px;
    text-align: center;
    color: #eee;
    border-radius: 4px;
    background: #212121;
    flex: none;
}

.st2 {
    width: 15px;
    height: 15px;
    margin-right: 4px;
    margin-top: -1px;
}

.st-on {
    margin-left: 2px;
}

.hint {
    margin-left: 15px;
    white-space: nowrap;
    color: #aaa;
    font-size: 10.4px;
}

.hint b {
    color: #eee;
}

.status-right {
    flex: 1;
    padding: 0 16px 2px 6px;
    display: flex;
    align-items: center;
    justify-content: space-between;
    color: #d5d5d5;
}
```
